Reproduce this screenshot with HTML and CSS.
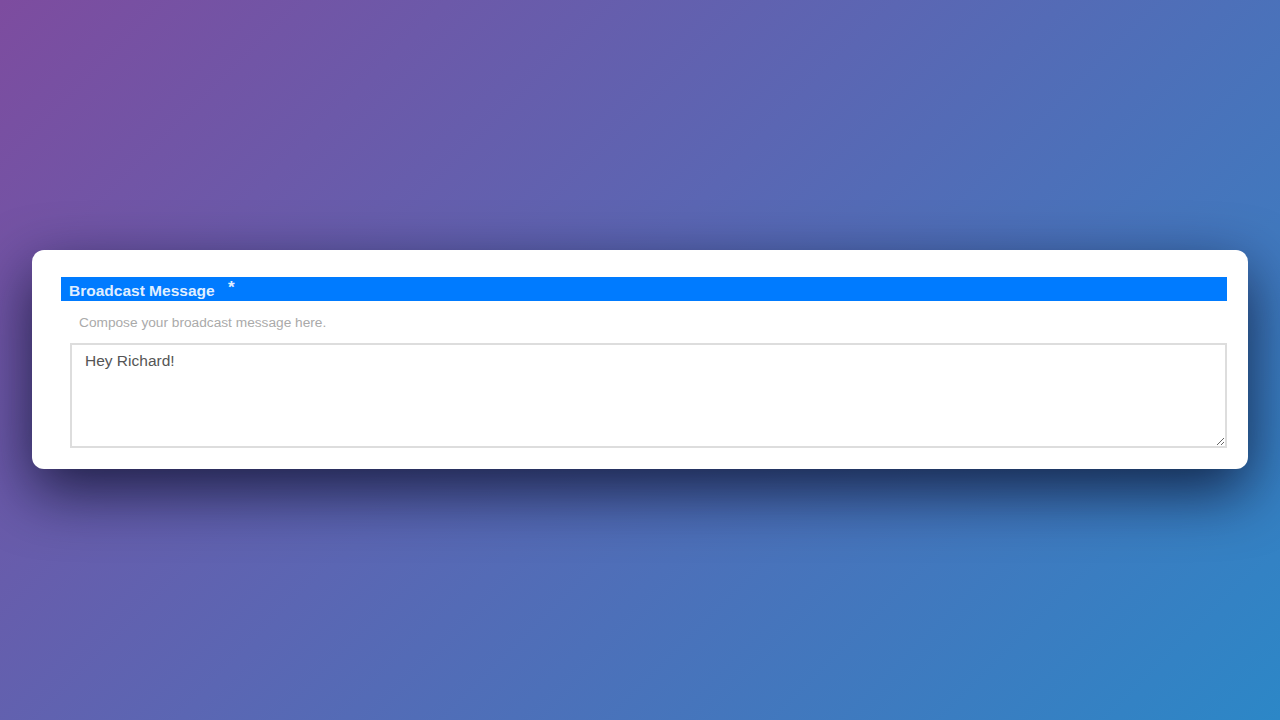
FILE: index.html
```html
<!DOCTYPE html>
<html>
<head>
    <meta charset="UTF-8">
    <title>Broadcast Message</title>
    <link rel="stylesheet" href="styles.css">
</head>
<body>
    <div class="card">
        <div class="field-title">Broadcast Message <span class="required">*</span></div>
        <p class="hint">Compose your broadcast message here.</p>
        <textarea class="message">Hey Richard!</textarea>
    </div>
</body>
</html>
```

FILE: styles.css
```css
html, body {
    height: 100%;
}
body {
    margin: 0;
    font-family: 'Liberation Sans', Arial, sans-serif;
    background: linear-gradient(135deg, #7d4c9f 0%, #5b66b3 45%, #2c87c7 100%);
    display: flex;
    align-items: center;
    justify-content: center;
}
.card {
    width: 1166px;
    background: #fff;
    border-radius: 12px;
    padding: 27px 21px 21px 29px;
    margin-bottom: 2px;
    box-shadow: 0 22px 60px rgba(5, 10, 35, 0.75);
}
.field-title {
    background: #007bff;
    color: rgba(255, 255, 255, 0.9);
    font-size: 15.5px;
    font-weight: bold;
    height: 24px;
    line-height: 28px;
    padding-left: 8px;
}
.required {
    position: relative;
    top: -3px;
    margin-left: 9px;
    font-size: 17px;
}
.hint {
    margin: 14px 0 0 18px;
    font-size: 13.7px;
    line-height: 16px;
    color: #aaa;
}
.message {
    display: block;
    box-sizing: border-box;
    width: calc(100% - 9px);
    height: 105px;
    margin: 12px 0 0 9px;
    padding: 7px 13px;
    border: 2px solid #ddd;
    font-family: 'Liberation Sans', Arial, sans-serif;
    font-size: 15.5px;
    color: #555;
    resize: vertical;
}
```
